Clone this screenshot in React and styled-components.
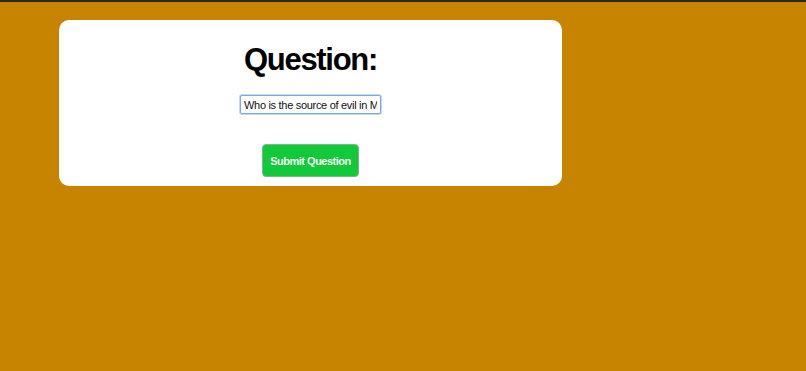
import React from "react";
import styled, { createGlobalStyle } from "styled-components";

const GlobalStyle = createGlobalStyle`
  html, body {
    margin: 0;
    padding: 0;
    background: #c68400;
    font-family: "Liberation Sans", Arial, sans-serif;
  }
  body {
    border-top: 2px solid #2d2a22;
    min-height: 369px;
  }
`;

const Page = styled.div`
  padding: 18px 0 0 59px;
`;

const Card = styled.form`
  display: flex;
  flex-direction: column;
  align-items: center;
  width: 503px;
  height: 166px;
  box-sizing: border-box;
  padding-top: 22px;
  background: #ffffff;
  border-radius: 10px;
`;

const Heading = styled.h1`
  margin: 0;
  font-size: 31px;
  font-weight: bold;
  letter-spacing: -1.3px;
  color: #000;
  line-height: 36px;
`;

const QuestionInput = styled.input`
  margin-top: 17px;
  width: 141px;
  height: 19px;
  box-sizing: border-box;
  padding: 0 3px;
  font-family: "Liberation Sans", Arial, sans-serif;
  font-size: 11px;
  letter-spacing: -0.3px;
  color: #111;
  border: 1px solid #7ea8e2;
  box-shadow: 0 0 0 1px #c3d7f3;
  border-radius: 2px;
  outline: none;
`;

const SubmitButton = styled.button`
  margin-top: 30px;
  width: 97px;
  height: 33px;
  padding: 0;
  white-space: nowrap;
  background: #12c93a;
  color: #f4fff4;
  border: 1px solid #7fb78b;
  border-radius: 4px;
  font-family: "Liberation Sans", Arial, sans-serif;
  font-size: 11px;
  font-weight: bold;
  letter-spacing: -0.5px;
  cursor: pointer;
`;

export default function App() {
  return (
    <>
      <GlobalStyle />
      <Page>
        <Card onSubmit={(e) => e.preventDefault()}>
          <Heading>Question:</Heading>
          <QuestionInput
            type="text"
            defaultValue="Who is the source of evil in Middle-earth?"
          />
          <SubmitButton type="submit">Submit Question</SubmitButton>
        </Card>
      </Page>
    </>
  );
}
